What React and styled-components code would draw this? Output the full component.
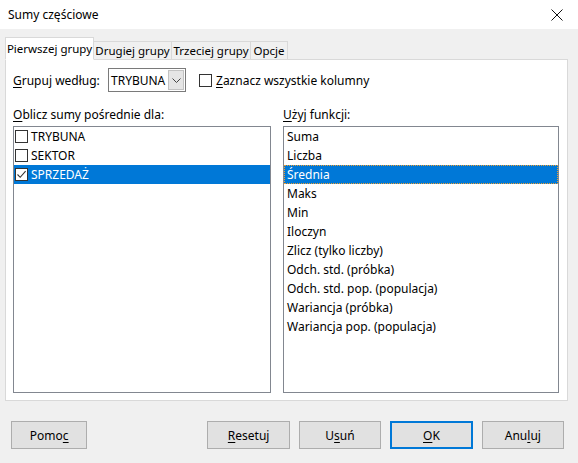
import React from "react"
import styled, { createGlobalStyle } from "styled-components"

const GlobalStyle = createGlobalStyle`
  html, body {
    margin: 0;
    padding: 0;
    background: #f0f0f0;
  }
  body {
    font-family: "Noto Sans", "Open Sans", sans-serif;
    font-size: 12px;
    color: #000;
  }
`

const Window = styled.div`
  width: 578px;
  height: 463px;
  background: #f0f0f0;
  display: flex;
  flex-direction: column;
  overflow: hidden;
  & > * {
    flex-shrink: 0;
  }
`

const TitleBar = styled.div`
  height: 29px;
  background: #fff;
  display: flex;
  align-items: center;
  justify-content: space-between;
  padding: 0 8px;
  font-size: 12px;
`

const CloseButton = styled.div`
  width: 14px;
  height: 14px;
  margin-right: 6px;
  display: flex;
  align-items: center;
  justify-content: center;
`

const Body = styled.div`
  padding: 8px 10px 0 5px;
  display: flex;
  flex-direction: column;
`

const TabBar = styled.div`
  display: flex;
  align-items: flex-end;
  height: 22px;
  position: relative;
  z-index: 1;
`

const Tab = styled.div`
  width: ${(p) => p.$width}px;
  height: ${(p) => (p.$active ? "23px" : "19px")};
  font-size: 11.5px;
  display: flex;
  align-items: center;
  justify-content: center;
  background: ${(p) => (p.$active ? "#fff" : "#f0f0f0")};
  border: 1px solid #d9d9d9;
  border-bottom: ${(p) => (p.$active ? "1px solid #fff" : "1px solid #d9d9d9")};
  margin-left: ${(p) => (p.$first ? "0" : "-1px")};
  margin-bottom: -1px;
  box-sizing: border-box;
  white-space: nowrap;
  overflow: hidden;
  position: relative;
  z-index: ${(p) => (p.$active ? 2 : 1)};
`

const Panel = styled.div`
  height: 342px;
  box-sizing: border-box;
  background: #fff;
  border: 1px solid #d9d9d9;
  padding: 8px 8px 7px 7px;
  display: flex;
  flex-direction: column;
`

const GroupRow = styled.div`
  display: flex;
  align-items: center;
  height: 24px;
`

const FieldLabel = styled.span`
  width: 95px;
  white-space: nowrap;
`

const Combo = styled.div`
  width: 78px;
  height: 24px;
  box-sizing: border-box;
  border: 1px solid #7a7a7a;
  display: flex;
  align-items: stretch;
`

const ComboText = styled.div`
  flex: 1;
  display: flex;
  align-items: center;
  padding-left: 2px;
`

const ComboArrow = styled.div`
  width: 16px;
  margin: 1px;
  background: #e5e5e5;
  border: 1px solid #c2c2c2;
  box-sizing: border-box;
  display: flex;
  align-items: center;
  justify-content: center;
`

const CheckLabel = styled.label`
  display: flex;
  align-items: center;
  gap: 4px;
  margin-left: 13px;
  white-space: nowrap;
`

const Box = styled.span`
  width: 13px;
  height: 13px;
  box-sizing: border-box;
  border: 1px solid #333;
  background: #fff;
  display: inline-flex;
  align-items: center;
  justify-content: center;
  flex-shrink: 0;
`

const Columns = styled.div`
  flex: 1;
  display: grid;
  grid-template-columns: 258px 276px;
  column-gap: 12px;
  margin-top: 10px;
`

const Column = styled.div`
  display: flex;
  flex-direction: column;
`

const ColumnTitle = styled.div`
  height: 24px;
  display: flex;
  align-items: center;
`

const ListBox = styled.div`
  flex: 1;
  border: 1px solid #828790;
  background: #fff;
`

const Row = styled.div`
  height: 19px;
  display: flex;
  align-items: center;
  gap: 3px;
  padding-left: ${(p) => (p.$check ? "1px" : "3px")};
  box-sizing: border-box;
  background: ${(p) => (p.$selected ? "#0078d7" : "transparent")};
  color: ${(p) => (p.$selected ? "#fff" : "#000")};
  outline: ${(p) => (p.$focus ? "1px dotted #f0a030" : "none")};
  outline-offset: -1px;
  white-space: nowrap;
`

const Footer = styled.div`
  display: flex;
  align-items: center;
  padding: 20px 14px 0 11px;
`

const Button = styled.div`
  width: ${(p) => (p.$narrow ? "77px" : "83px")};
  height: 28px;
  box-sizing: border-box;
  background: #e1e1e1;
  border: ${(p) => (p.$default ? "2px solid #0078d7" : "1px solid #adadad")};
  display: flex;
  align-items: center;
  justify-content: center;
  margin-left: ${(p) => p.$gap || "9px"};
`

const U = styled.span`
  text-decoration: underline;
  text-underline-offset: 2px;
`

const Check = () => (
  <svg width="11" height="11" viewBox="0 0 11 11">
    <path d="M1.5 5.5 L4.2 8.3 L9.6 2.2" fill="none" stroke="#333" strokeWidth="1.1" />
  </svg>
)

const tabs = [
  { label: "Pierwszej grupy", width: 89, active: true },
  { label: "Drugiej grupy", width: 79 },
  { label: "Trzeciej grupy", width: 80 },
  { label: "Opcje", width: 38 },
]

const firstList = [
  { name: "TRYBUNA" },
  { name: "SEKTOR" },
  { name: "SPRZEDAŻ", checked: true, selected: true },
]

const functions = [
  "Suma",
  "Liczba",
  "Średnia",
  "Maks",
  "Min",
  "Iloczyn",
  "Zlicz (tylko liczby)",
  "Odch. std. (próbka)",
  "Odch. std. pop. (populacja)",
  "Wariancja (próbka)",
  "Wariancja pop. (populacja)",
]

const App = () => {
  return (
    <Window>
      <GlobalStyle />
      <TitleBar>
        <span>Sumy częściowe</span>
        <CloseButton>
          <svg width="12" height="12" viewBox="0 0 12 12">
            <path d="M0.5 0.5 L11.5 11.5 M11.5 0.5 L0.5 11.5" stroke="#111" strokeWidth="1" />
          </svg>
        </CloseButton>
      </TitleBar>
      <Body>
        <TabBar>
          {tabs.map((t, i) => (
            <Tab key={t.label} $active={t.active} $first={i === 0} $width={t.width}>
              {t.label}
            </Tab>
          ))}
        </TabBar>
        <Panel>
          <GroupRow>
            <FieldLabel>
              <U>G</U>rupuj według:
            </FieldLabel>
            <Combo>
              <ComboText>TRYBUNA</ComboText>
              <ComboArrow>
                <svg width="9" height="5" viewBox="0 0 9 5">
                  <path d="M0.5 0.5 L4.5 4.5 L8.5 0.5" fill="none" stroke="#444" strokeWidth="1" />
                </svg>
              </ComboArrow>
            </Combo>
            <CheckLabel>
              <Box />
              <span>
                <U>Z</U>aznacz wszystkie kolumny
              </span>
            </CheckLabel>
          </GroupRow>
          <Columns>
            <Column>
              <ColumnTitle>
                <span>
                  <U>O</U>blicz sumy pośrednie dla:
                </span>
              </ColumnTitle>
              <ListBox>
                {firstList.map((item) => (
                  <Row key={item.name} $check $selected={item.selected}>
                    <Box>{item.checked && <Check />}</Box>
                    <span>{item.name}</span>
                  </Row>
                ))}
              </ListBox>
            </Column>
            <Column>
              <ColumnTitle>
                <span>
                  <U>U</U>żyj funkcji:
                </span>
              </ColumnTitle>
              <ListBox>
                {functions.map((name) => (
                  <Row key={name} $selected={name === "Średnia"} $focus={name === "Średnia"}>
                    {name}
                  </Row>
                ))}
              </ListBox>
            </Column>
          </Columns>
        </Panel>
      </Body>
      <Footer>
        <Button $narrow $gap="0">
          <span>
            Pomo<U>c</U>
          </span>
        </Button>
        <Button $gap="120px">
          <span>
            <U>R</U>esetuj
          </span>
        </Button>
        <Button>
          <span>
            U<U>s</U>uń
          </span>
        </Button>
        <Button $default>
          <span>
            <U>O</U>K
          </span>
        </Button>
        <Button>
          <span>
            Anu<U>l</U>uj
          </span>
        </Button>
      </Footer>
    </Window>
  )
}

export default App
